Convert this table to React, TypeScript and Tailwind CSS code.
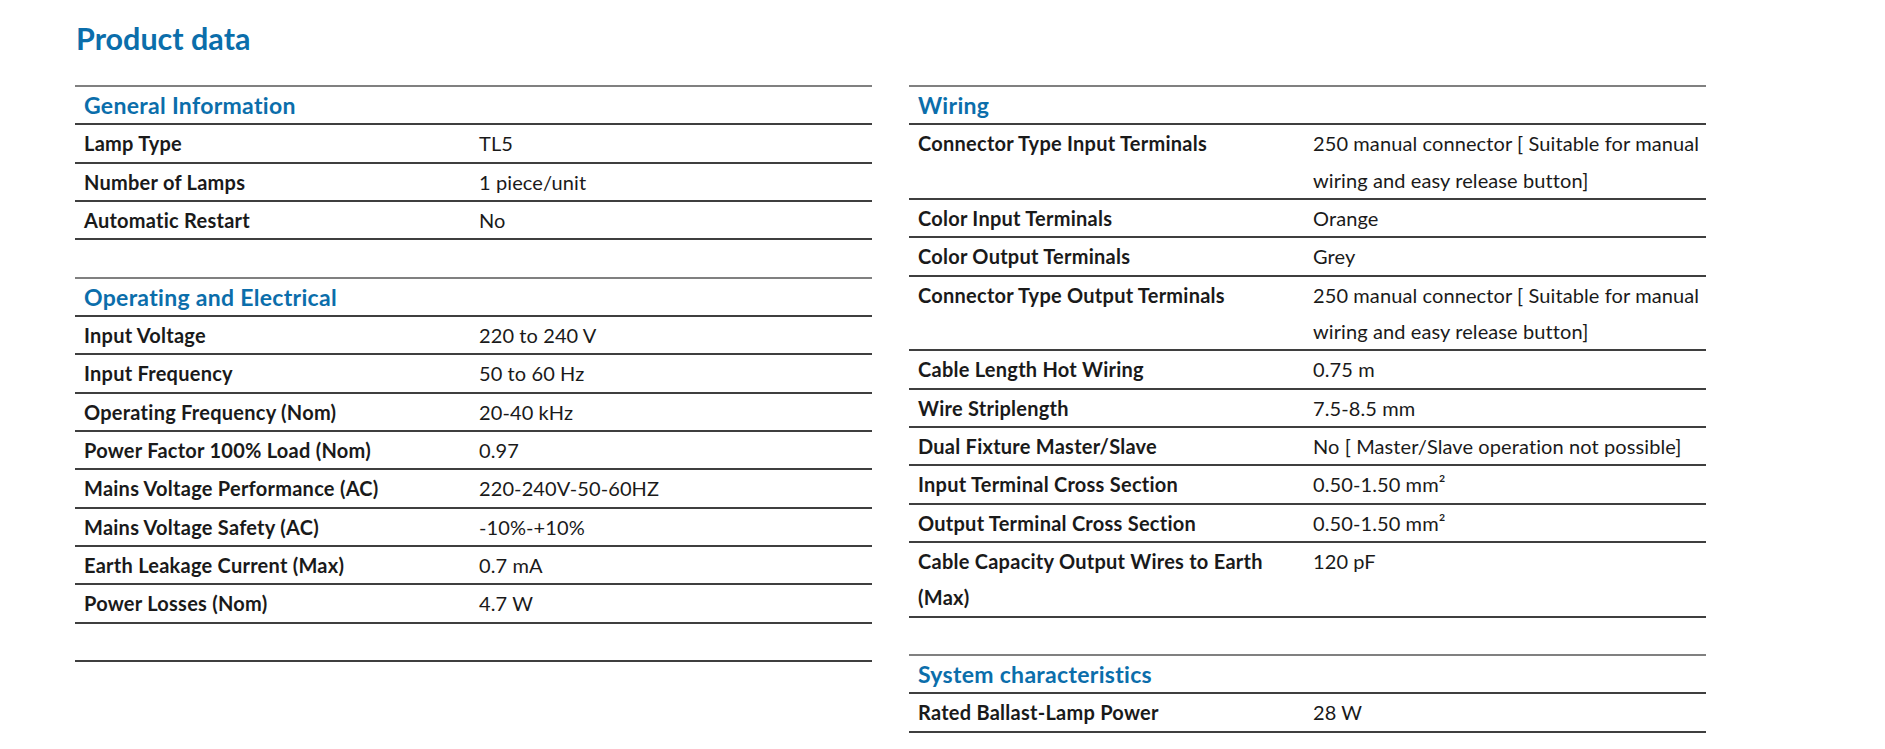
import React from "react";

type Row = { label: React.ReactNode; value: React.ReactNode };

const Header = ({ title }: { title: string }) => (
  <div className="border-t-2 border-[#808080]">
    <div className="border-b-2 border-[#3f3f3f] pl-[9px] text-[23px] leading-[36.33px] font-bold tracking-[0.3px] text-[#0b6eab]">
      {title}
    </div>
  </div>
);

const DataRow = ({ label, value, right }: Row & { right?: boolean }) => (
  <div
    className={
      right
        ? "grid grid-cols-[395px_1fr] border-b-2 border-[#3f3f3f] text-[20px] leading-[36.33px] text-[#1a1a1a]"
        : "grid grid-cols-[396px_1fr] border-b-2 border-[#3f3f3f] text-[20px] leading-[36.33px] text-[#1a1a1a]"
    }
  >
    <div className="pl-[9px] font-bold tracking-[0.25px]">{label}</div>
    <div className={right ? "pl-[9px] tracking-[0.1px]" : "pl-[8px] tracking-[0.1px]"}>{value}</div>
  </div>
);

const Section = ({ title, rows, right }: { title: string; rows: Row[]; right?: boolean }) => (
  <div>
    <Header title={title} />
    {rows.map((r, i) => (
      <DataRow key={i} label={r.label} value={r.value} right={right} />
    ))}
  </div>
);

const general: Row[] = [
  { label: "Lamp Type", value: "TL5" },
  { label: "Number of Lamps", value: "1 piece/unit" },
  { label: "Automatic Restart", value: "No" },
];

const operating: Row[] = [
  { label: "Input Voltage", value: "220 to 240 V" },
  { label: "Input Frequency", value: "50 to 60 Hz" },
  { label: "Operating Frequency (Nom)", value: "20-40 kHz" },
  { label: "Power Factor 100% Load (Nom)", value: "0.97" },
  { label: "Mains Voltage Performance (AC)", value: "220-240V-50-60HZ" },
  { label: "Mains Voltage Safety (AC)", value: "-10%-+10%" },
  { label: "Earth Leakage Current (Max)", value: "0.7 mA" },
  { label: "Power Losses (Nom)", value: "4.7 W" },
];

const wiring: Row[] = [
  {
    label: "Connector Type Input Terminals",
    value: (
      <>
        250 manual connector [ Suitable for manual
        <br />
        wiring and easy release button]
      </>
    ),
  },
  { label: "Color Input Terminals", value: "Orange" },
  { label: "Color Output Terminals", value: "Grey" },
  {
    label: "Connector Type Output Terminals",
    value: (
      <>
        250 manual connector [ Suitable for manual
        <br />
        wiring and easy release button]
      </>
    ),
  },
  { label: "Cable Length Hot Wiring", value: "0.75 m" },
  { label: "Wire Striplength", value: "7.5-8.5 mm" },
  { label: "Dual Fixture Master/Slave", value: "No [ Master/Slave operation not possible]" },
  { label: "Input Terminal Cross Section", value: "0.50-1.50 mm²" },
  { label: "Output Terminal Cross Section", value: "0.50-1.50 mm²" },
  {
    label: (
      <>
        Cable Capacity Output Wires to Earth
        <br />
        (Max)
      </>
    ),
    value: "120 pF",
  },
];

const system: Row[] = [{ label: "Rated Ballast-Lamp Power", value: "28 W" }];

export default function App() {
  return (
    <div
      className="min-h-[749px] w-full bg-white"
      style={{ fontFamily: "Lato, 'Open Sans', sans-serif" }}
    >
      <h1 className="pl-[76px] pt-[19.5px] text-[30.5px] leading-[36px] font-bold text-[#0b6eab]">
        Product data
      </h1>
      <div className="mt-[29.5px] flex gap-[37px] pl-[75px]">
        <div className="w-[797px]">
          <Section title="General Information" rows={general} />
          <div className="h-[36.33px]" />
          <Section title="Operating and Electrical" rows={operating} />
          <div className="h-[38.33px] border-b-2 border-[#3f3f3f]" />
        </div>
        <div className="w-[797px]">
          <Section title="Wiring" rows={wiring} right />
          <div className="h-[36.33px]" />
          <Section title="System characteristics" rows={system} right />
        </div>
      </div>
    </div>
  );
}
